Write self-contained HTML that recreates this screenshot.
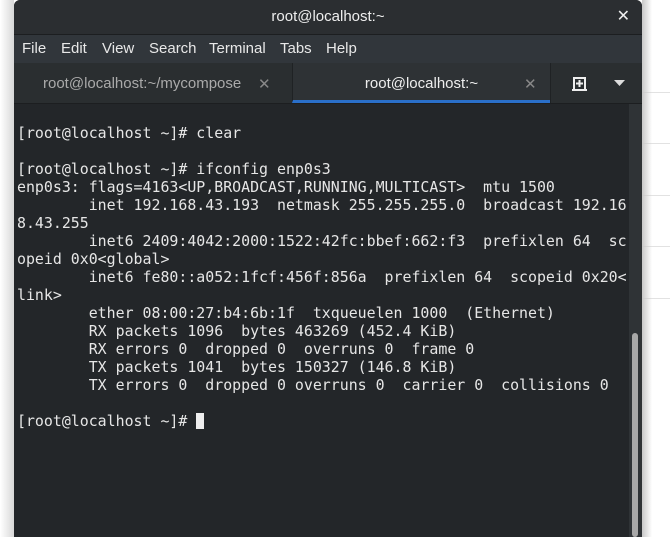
<!DOCTYPE html>
<html><head><style>
*{margin:0;padding:0;box-sizing:border-box}
body{width:670px;height:537px;background:#fff;position:relative;overflow:hidden;font-family:"Liberation Sans","DejaVu Sans",sans-serif}
.line{position:absolute;left:642px;right:0;height:1px;background:#e2e2e2}
.shadow{position:absolute;top:0;bottom:0;left:0;width:14px;background:linear-gradient(to right,#fff,#d8d8d8)}
.shadowr{position:absolute;top:0;bottom:0;left:642px;width:10px;background:linear-gradient(to right,#c8c8c8,rgba(255,255,255,0))}
.win{position:absolute;left:14px;top:0;width:628px;height:537px;background:#232629;border-radius:6px 6px 0 0;overflow:hidden}
.title{height:35px;background:#2b2e31;color:#eee;font-size:15px;text-align:center;line-height:34px;border-bottom:1px solid #1c1e20;position:relative}
.title .x{position:absolute;right:12px;top:0;font-size:16px;font-weight:bold}
.menu{height:28px;background:#31363b;color:#e8e8e8;font-size:15px;line-height:28px;padding-left:8px}
.menu span{position:absolute}
.tabs{height:41px;background:#2a2e30;position:relative;border-bottom:1px solid #1c1e20;color:#aaa;font-size:15px}
.tab{position:absolute;top:0;height:40px;line-height:42px;white-space:nowrap}
.t1{left:29px}
.t2{left:278px;width:258px;background:#2e3235;color:#eee;text-align:center;border-left:1px solid #1f2224;border-bottom:3px solid #2a6fc9}
.cx{position:absolute;font-size:15px;color:#888}
.mono{position:absolute;left:3px;top:124px;font-family:"DejaVu Sans Mono","Liberation Mono",monospace;font-size:14.9px;line-height:18px;color:#e6e6e6;white-space:pre}
.sb{position:absolute;left:615px;top:104px;width:13px;bottom:0;background:#2f3336}
.thumb{position:absolute;left:618px;top:333px;width:6px;bottom:0;background:#a8a8a8;border-radius:3px}
.cur{display:inline-block;width:8px;height:16px;background:#eee;vertical-align:-3px}
</style></head><body>
<div class="shadow"></div>
<div class="line" style="top:92px"></div><div class="line" style="top:143px"></div><div class="line" style="top:195px"></div><div class="line" style="top:246px"></div><div class="line" style="top:298px"></div>
<div class="shadowr"></div>
<div class="win">
<div class="title">root@localhost:~<span class="x">✕</span></div>
<div class="menu" style="position:relative"><span style="left:8px">File</span><span style="left:47px">Edit</span><span style="left:88px">View</span><span style="left:135px">Search</span><span style="left:195px">Terminal</span><span style="left:266px">Tabs</span><span style="left:312px">Help</span></div>
<div class="tabs">
<div class="tab t1">root@localhost:~/mycompose</div><span class="cx" style="left:244px;top:12px">✕</span>
<div class="tab t2">root@localhost:~</div><span class="cx" style="left:510px;top:12px">✕</span>
<div style="position:absolute;left:536px;top:0;width:1px;height:40px;background:#1f2224"></div>
<svg style="position:absolute;left:557px;top:12px" width="17" height="17" viewBox="0 0 17 17"><path d="M3 14V3h11v11M1 15h15M8.5 5v7M5 8.5h7" stroke="#eee" stroke-width="2" fill="none"/></svg>
<svg style="position:absolute;left:600px;top:17px" width="11" height="7"><path d="M0 0h11L5.5 6z" fill="#ddd"/></svg>
</div>
<div class="sb"></div><div class="thumb"></div>
<div class="mono">[root@localhost ~]# clear

[root@localhost ~]# ifconfig enp0s3
enp0s3: flags=4163&lt;UP,BROADCAST,RUNNING,MULTICAST&gt;  mtu 1500
        inet 192.168.43.193  netmask 255.255.255.0  broadcast 192.16
8.43.255
        inet6 2409:4042:2000:1522:42fc:bbef:662:f3  prefixlen 64  sc
opeid 0x0&lt;global&gt;
        inet6 fe80::a052:1fcf:456f:856a  prefixlen 64  scopeid 0x20&lt;
link&gt;
        ether 08:00:27:b4:6b:1f  txqueuelen 1000  (Ethernet)
        RX packets 1096  bytes 463269 (452.4 KiB)
        RX errors 0  dropped 0  overruns 0  frame 0
        TX packets 1041  bytes 150327 (146.8 KiB)
        TX errors 0  dropped 0 overruns 0  carrier 0  collisions 0

[root@localhost ~]# <span class="cur"></span></div>
</div>
</body></html>
